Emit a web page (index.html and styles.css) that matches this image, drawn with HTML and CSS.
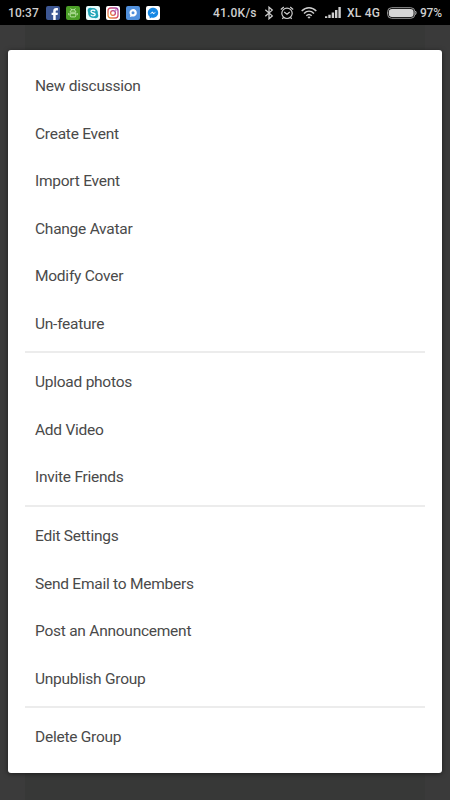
FILE: index.html
```html
<!DOCTYPE html>
<html lang="en">
<head>
<meta charset="utf-8">
<meta name="viewport" content="width=device-width">
<title>Group options</title>
<link rel="stylesheet" href="styles.css">
</head>
<body>
<header class="status">
  <span class="time">10:37</span>
  <div class="apps">
    <svg viewBox="0 0 14 14"><rect width="14" height="14" rx="2" fill="#3d5793"/><path d="M7.2 14V9H5.6V6.7h1.6V5.2c0-2 1.1-3.1 3-3.1h1.7v2.3h-1.1c-.9 0-1.1.4-1.1 1.2v1.1h2.2L11.6 9H9.7v5z" fill="#fff"/></svg>
    <svg viewBox="0 0 14 14"><rect width="14" height="14" rx="2" fill="#4b9e27"/><path d="M4.1 6.2C4.3 4.4 5.4 3.7 7 3.7s2.7.7 2.9 2.5zM4.7 2.4l1 1.5M9.3 2.4l-1 1.5M4.2 7.7v2.1c0 .8.4 1.1 1.1 1.1h3.4c.7 0 1.1-.3 1.1-1.1V7.7zM2.8 7v2.2M11.2 7v2.2" fill="none" stroke="#c9edb5" stroke-width=".9"/></svg>
    <svg viewBox="0 0 14 14"><rect width="14" height="14" rx="2" fill="#e9fbfd"/><circle cx="7" cy="7" r="4.9" fill="#20a5b8"/><circle cx="4.4" cy="4.4" r="2.7" fill="#20a5b8"/><circle cx="9.6" cy="9.6" r="2.7" fill="#20a5b8"/><path d="M9.1 5.2C8.5 3.7 5 3.8 5 5.5c0 2 4.2 1 4.2 3 0 1.9-3.8 1.8-4.4.1" fill="none" stroke="#fff" stroke-width="1.3"/></svg>
    <svg viewBox="0 0 14 14"><defs><linearGradient id="insta" x1="0" y1="1" x2="1" y2="0"><stop stop-color="#eca13c"/><stop offset=".5" stop-color="#d94b62"/><stop offset="1" stop-color="#9b45b0"/></linearGradient></defs><rect width="14" height="14" rx="2" fill="#fff"/><g fill="none" stroke="url(#insta)" stroke-width="1.3"><rect x="2" y="2" width="10" height="10" rx="2.7"/><circle cx="7" cy="7" r="2.4"/></g><circle cx="9.9" cy="4.1" r=".8" fill="#b14a9b"/></svg>
    <svg viewBox="0 0 14 14"><rect width="14" height="14" rx="2" fill="#5190dc"/><path d="M7 3a3.8 3.8 0 1 1-1.2 7.4L3.9 11l.4-1.8A3.8 3.8 0 0 1 7 3z" fill="#fff"/><circle cx="7" cy="6.8" r="1.5" fill="#5190dc"/></svg>
    <svg viewBox="0 0 14 14"><rect width="14" height="14" rx="2" fill="#fff"/><path d="M7 1.8c-3 0-5.2 2.2-5.2 5 0 1.6.7 3 1.9 3.9v1.9l1.8-1c3.5.9 6.7-1.4 6.7-4.8 0-2.8-2.2-5-5.2-5z" fill="#1688e4"/><path d="M3.8 8.2l2.5-2.6 1.5 1.3 2.5-1.3-2.5 2.6-1.5-1.3z" fill="#fff"/></svg>
  </div>
  <div class="system">
    <span class="speed">41.0K/s</span>
    <svg class="bluetooth" viewBox="0 0 10 14"><path d="M1.3 3.7l7 6.2L5 12.8V1.2l3.3 2.9-7 6.2" fill="none" stroke="currentColor" stroke-width="1.25"/></svg>
    <svg class="alarm" viewBox="0 0 14 14"><g fill="none" stroke="currentColor" stroke-width="1.2"><circle cx="7" cy="7.3" r="5.2"/><path d="M.8 3.5l3-2.5M13.2 3.5l-3-2.5M4.2 6l2.8 2.2L9.7 6M3.5 11.5l-1.2 1.4M10.5 11.5l1.2 1.4"/></g></svg>
    <svg class="wifi" viewBox="0 0 16 12"><g fill="none" stroke="currentColor" stroke-width="1.5"><path d="M.7 4.1C5-.3 11-.3 15.3 4.1M3 6.5c3-2.9 7-2.9 10 0M5.3 8.7c1.7-1.6 3.7-1.6 5.4 0"/></g><path d="M6.4 10.1Q8 8.9 9.6 10.1L8 11.8z" fill="currentColor"/></svg>
    <svg class="signal" viewBox="0 0 16 11"><path d="M0 9.2h2.3V11H0zM3.3 7.8h2.4V11H3.3zM6.7 5.5h2.4V11H6.7zM10 3h2.4v8H10zM13.4 0h2.4v11h-2.4z" fill="currentColor"/></svg>
    <span class="carrier">XL 4G</span>
    <svg class="battery" viewBox="0 0 30 12"><rect x=".6" y=".7" width="27.2" height="10.6" rx="4" fill="none" stroke="#999" stroke-width="1"/><rect x="1.8" y="1.9" width="24.8" height="8.2" rx="3" fill="#d5d5d5"/><path d="M28.5 4q1.3 1.8 0 3.7" fill="none" stroke="#bbb"/></svg>
    <span class="percent">97%</span>
  </div>
</header>
<main class="backdrop">
  <nav class="menu">
    <ul class="group">
      <li>New discussion</li>
      <li>Create Event</li>
      <li>Import Event</li>
      <li>Change Avatar</li>
      <li>Modify Cover</li>
      <li>Un-feature</li>
    </ul>
    <ul class="group">
      <li>Upload photos</li>
      <li>Add Video</li>
      <li>Invite Friends</li>
    </ul>
    <ul class="group">
      <li>Edit Settings</li>
      <li>Send Email to Members</li>
      <li>Post an Announcement</li>
      <li>Unpublish Group</li>
    </ul>
    <ul class="group">
      <li>Delete Group</li>
    </ul>
  </nav>
</main>
</body>
</html>
```

FILE: styles.css
```css
* { box-sizing: border-box; }
body {
  margin: 0;
  height: 800px;
  overflow: hidden;
  display: flex;
  flex-direction: column;
  background: #383838;
  font-family: Roboto, sans-serif;
}
.status {
  flex: none;
  height: 25px;
  display: flex;
  align-items: center;
  padding: 0 7px 0 8px;
  background: #000;
  color: #cecece;
  font-size: 12px;
  font-weight: 500;
  line-height: 23px;
  white-space: nowrap;
}
.status svg { display: block; flex: none; }
.status span { padding-top: 2px; }
.time { width: 38px; letter-spacing: .1px; }
.apps { display: flex; gap: 6px; }
.apps svg { width: 14px; height: 14px; }
.system { display: flex; align-items: center; margin-left: auto; }
.speed { width: 51px; letter-spacing: .2px; }
.bluetooth { width: 10px; height: 14px; margin-right: 6px; }
.alarm { width: 14px; height: 14px; margin-right: 7px; }
.wifi { width: 16px; height: 12px; margin-right: 8px; }
.signal { width: 16px; height: 11px; margin-right: 6px; }
.carrier { width: 40px; letter-spacing: .2px; }
.battery { width: 30px; height: 12px; margin-right: 3px; }
.percent { width: 23px; letter-spacing: -.2px; }
.backdrop {
  flex: 1;
  padding: 25px 8px 27px;
  background: linear-gradient(90deg, #3b3b3b 25px, #373837 25px, #373837 425px, #3a3a3a 425px);
}
.menu {
  height: 723px;
  padding: 12.2px 17px;
  background: #fff;
  border-radius: 3px;
  box-shadow: 0 1px 5px rgba(0, 0, 0, .5);
}
.group { margin: 0; padding: 0; list-style: none; }
.group + .group {
  margin-top: 4px;
  padding-top: 5.2px;
  border-top: 2px solid #ececec;
}
.group li {
  height: 47.5px;
  padding: 1px 0 0 10px;
  color: #4a4a4a;
  font-size: 15.5px;
  letter-spacing: -.25px;
  line-height: 47.5px;
}
```
